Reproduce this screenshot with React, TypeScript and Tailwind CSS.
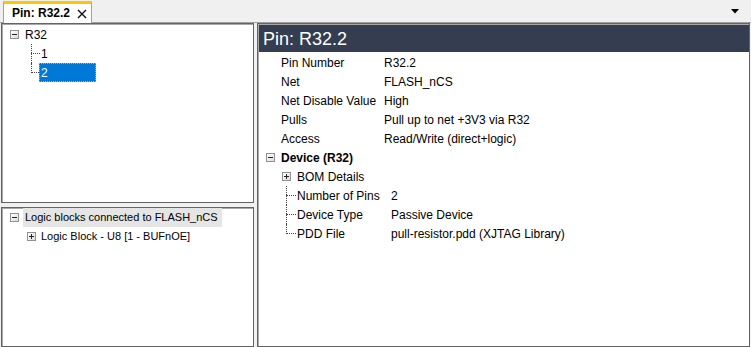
import React from 'react';

const font = { fontFamily: '"Liberation Sans", Arial, sans-serif' };

// small Windows-style expander box
const Expander = ({ open }: { open: boolean }) => (
  <span className="relative inline-block w-[9px] h-[9px] border border-[#919191] bg-gradient-to-br from-white to-[#dcdcdc] shrink-0">
    <span className="absolute left-[1px] top-[3px] w-[5px] h-[1px] bg-[#222]" />
    {!open && <span className="absolute left-[3px] top-[1px] w-[1px] h-[5px] bg-[#222]" />}
  </span>
);

// dotted tree connector: vertical line + horizontal stub
const Connector = ({ last, width }: { last: boolean; width: number }) => (
  <span className="relative h-full shrink-0" style={{ width }}>
    <span
      className={`absolute left-0 top-0 border-l border-dotted border-[#444] ${last ? 'h-[10px]' : 'h-full'}`}
    />
    <span className="absolute left-0 top-[9px] border-t border-dotted border-[#444]" style={{ width }} />
  </span>
);

const pinRows: [string, string][] = [
  ['Pin Number', 'R32.2'],
  ['Net', 'FLASH_nCS'],
  ['Net Disable Value', 'High'],
  ['Pulls', 'Pull up to net +3V3 via R32'],
  ['Access', 'Read/Write (direct+logic)'],
];

const deviceRows: [string, string][] = [
  ['Number of Pins', '2'],
  ['Device Type', 'Passive Device'],
  ['PDD File', 'pull-resistor.pdd (XJTAG Library)'],
];

const panel = 'bg-white border border-[#646464] shadow-[inset_1px_1px_0_#a8a8a8]';

export default function App() {
  return (
    <div className="w-[751px] h-[347px] bg-[#f0f0f0] flex flex-col text-[12px] text-black overflow-hidden" style={font}>
      {/* tab strip */}
      <div className="h-[23px] shrink-0 flex items-end justify-between border-b border-[#a0a0a0]">
        <div className="ml-[3px] h-[22px] -mb-[1px] bg-white border-t-[3px] border-t-[#fcc800] border-x border-[#a0a0a0] flex items-center pl-[8px] pr-[4px] pb-[1px] whitespace-nowrap">
          <span className="font-bold">Pin: R32.2</span>
          <svg width="10" height="10" viewBox="0 0 10 10" className="ml-[7px] mt-[1px] shrink-0">
            <path d="M1 1 L9 9 M9 1 L1 9" stroke="#111" strokeWidth="1.4" />
          </svg>
        </div>
        <svg width="8" height="5" viewBox="0 0 8 5" className="mr-[12px] mb-[8px]">
          <path d="M0 0 H8 L4 4.5 Z" fill="#000" />
        </svg>
      </div>

      {/* panels */}
      <div className="flex-1 flex gap-[3px] pl-[1px] pr-[1px] min-h-0">
        <div className="w-[253px] flex flex-col gap-[4px]">
          <div className={`${panel} h-[180px] pt-[1px]`}>
            <div className="h-[19px] flex items-center pl-[8px] gap-[6px]">
              <Expander open />
              <span>R32</span>
            </div>
            <div className="h-[19px] flex items-stretch pl-[29px]">
              <Connector last={false} width={9} />
              <span className="self-center pl-[1px]">1</span>
            </div>
            <div className="h-[19px] flex items-stretch pl-[29px]">
              <Connector last width={8} />
              <span className="w-[57px] bg-[#0078d7] text-white border border-dotted border-[#f0a040] flex items-center pl-[1px]">2</span>
            </div>
          </div>
          <div className={`${panel} flex-1 text-[11px]`}>
            <div className="h-[19px] flex items-center pl-[8px]">
              <Expander open />
              <span className="ml-[4px] bg-[#e5e5e5] h-full flex items-center pl-[2px] pr-[4px]">Logic blocks connected to FLASH_nCS</span>
            </div>
            <div className="h-[19px] flex items-center pl-[25px] gap-[5px]">
              <Expander open={false} />
              <span>Logic Block - U8 [1 - BUFnOE]</span>
            </div>
          </div>
        </div>

        <div className={`${panel} flex-1 pt-[1px] pl-[1px]`}>
          <div className="h-[27px] bg-[#353d51] text-white text-[18px] flex items-center pl-[4px] leading-none">
            Pin: R32.2
          </div>
          <div className="pt-[1px]">
            {pinRows.map(([k, v]) => (
              <div key={k} className="h-[19px] flex items-center pl-[22px]">
                <span className="w-[103px]">{k}</span>
                <span>{v}</span>
              </div>
            ))}
            <div className="h-[19px] flex items-center pl-[7px]">
              <Expander open />
              <span className="ml-[6px] font-bold">Device (R32)</span>
            </div>
            <div className="h-[19px] flex items-center pl-[23px]">
              <Expander open={false} />
              <span className="ml-[6px]">BOM Details</span>
            </div>
            {deviceRows.map(([k, v], i) => (
              <div key={k} className="h-[19px] flex items-stretch pl-[27px]">
                <Connector last={i === deviceRows.length - 1} width={10} />
                <span className="self-center w-[95px] pl-[1px]">{k}</span>
                <span className="self-center">{v}</span>
              </div>
            ))}
          </div>
        </div>
      </div>
    </div>
  );
}
